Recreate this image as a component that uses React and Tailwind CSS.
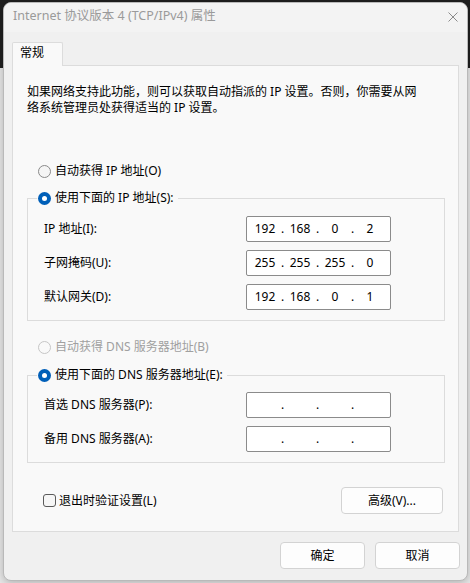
import React from 'react';

const font = "font-['Noto_Sans','Noto_Sans_CJK_SC',sans-serif]";

// one radio circle, with selected / disabled looks
function Radio({ checked, disabled }) {
  if (checked) {
    return (
      <span className="flex h-[13px] w-[13px] shrink-0 items-center justify-center rounded-full bg-[#005fb8]">
        <span className="h-[5px] w-[5px] rounded-full bg-white" />
      </span>
    );
  }
  return (
    <span
      className={`h-[13px] w-[13px] shrink-0 rounded-full border ${disabled ? 'border-[#c6c6c6] bg-[#f9f9f9]' : 'border-[#8a8a8a] bg-[#f5f5f5]'}`}
    />
  );
}

function RadioRow({ checked, disabled, children }) {
  return (
    <div className={`flex h-[16px] items-center gap-[4px] leading-[16px] ${disabled ? 'text-[#a0a0a0]' : 'text-black'}`}>
      <Radio checked={checked} disabled={disabled} />
      <span>{children}</span>
    </div>
  );
}

// the four-part address box
function IpField({ parts }) {
  return (
    <div className="flex h-[26px] w-[145px] items-center rounded-[2px] border border-[#8b8b8b] bg-white pl-[3px] leading-[16px]">
      {parts.map((p, i) => (
        <div key={i} className="flex w-[35px] items-center">
          <span className="w-[30px] text-center">{p}</span>
          {i < 3 && <span className="w-[5px] text-center">.</span>}
        </div>
      ))}
    </div>
  );
}

function FieldRow({ label, parts }) {
  return (
    <div className="flex items-center">
      <span className="w-[202px] leading-[16px]">{label}</span>
      <IpField parts={parts} />
    </div>
  );
}

function GroupBox({ legend, children, pt }) {
  return (
    <div className="ml-[14px] w-[418px]">
      <div className="relative z-10 ml-[10px] w-fit bg-[#f9f9f9] pl-[1px] pr-[4px]">
        <RadioRow checked>{legend}</RadioRow>
      </div>
      <div className={`-mt-[8px] flex flex-col gap-[8px] border border-[#dcdcdc] pb-[10px] pl-[16px] ${pt}`}>
        {children}
      </div>
    </div>
  );
}

export default function App() {
  return (
    <div className={`h-[583px] w-[470px] overflow-hidden bg-[linear-gradient(to_bottom,#1f1f1f_68px,#e9e9e9_68px)] pl-[3px] pt-[2px] text-[12px] ${font}`}>
      <div className="flex h-[579px] w-[465px] flex-col overflow-hidden rounded-[8px] border border-[#b9b9b9] bg-[#f0f0f0] shadow-[0_2px_10px_rgba(0,0,0,0.25)]">
        {/* title bar */}
        <div className="flex h-[29px] shrink-0 items-center justify-between bg-[#f3f3f3] pb-[3px] pl-[9px] pr-[9px]">
          <span className="text-[12.5px] leading-[16px] text-[#9a9a9a]">Internet 协议版本 4 (TCP/IPv4) 属性</span>
          <svg width="10" height="10" viewBox="0 0 10 10" className="mt-[1px]">
            <path d="M0.5 0.5 L9.5 9.5 M9.5 0.5 L0.5 9.5" stroke="#8a8a8a" strokeWidth="1" />
          </svg>
        </div>

        {/* tab */}
        <div className="relative z-10 -mb-[1px] ml-[8px] mt-[10px] flex h-[24px] w-[51px] items-start rounded-t-[2px] border border-b-0 border-[#dcdcdc] bg-[#f9f9f9] pl-[7px] pt-[2px] leading-[16px] text-black">
          常规
        </div>

        {/* tab panel */}
        <div className="mx-[8px] flex w-[447px] flex-col border border-[#dcdcdc] bg-[#f9f9f9] pb-[17px] text-black">
          <p className="ml-[14px] mt-[18px] leading-[16px]">
            如果网络支持此功能，则可以获取自动指派的 IP 设置。否则，你需要从网
            <br />
            络系统管理员处获得适当的 IP 设置。
          </p>

          <div className="ml-[25px] mt-[47px]">
            <RadioRow>自动获得 IP 地址(O)</RadioRow>
          </div>

          <div className="mt-[11px]">
            <GroupBox legend="使用下面的 IP 地址(S):" pt="pt-[17px]">
              <FieldRow label="IP 地址(I):" parts={['192', '168', '0', '2']} />
              <FieldRow label="子网掩码(U):" parts={['255', '255', '255', '0']} />
              <FieldRow label="默认网关(D):" parts={['192', '168', '0', '1']} />
            </GroupBox>
          </div>

          <div className="ml-[25px] mt-[18px]">
            <RadioRow disabled>自动获得 DNS 服务器地址(B)</RadioRow>
          </div>

          <div className="mt-[12px]">
            <GroupBox legend="使用下面的 DNS 服务器地址(E):" pt="pt-[16px]">
              <FieldRow label="首选 DNS 服务器(P):" parts={['', '', '', '']} />
              <FieldRow label="备用 DNS 服务器(A):" parts={['', '', '', '']} />
            </GroupBox>
          </div>

          <div className="mt-[24px] flex items-center justify-between pl-[30px] pr-[15px]">
            <label className="flex items-center gap-[3px] leading-[16px]">
              <span className="h-[13px] w-[13px] rounded-[3px] border border-[#5a5a5a] bg-[#f6f6f6]" />
              <span>退出时验证设置(L)</span>
            </label>
            <button className="flex h-[27px] w-[102px] items-center justify-center rounded-[4px] border border-[#d3d3d3] bg-[#fdfdfd] leading-[16px] text-black">
              高级(V)...
            </button>
          </div>
        </div>

        {/* dialog buttons */}
        <div className="mt-[10px] flex justify-end gap-[10px] pr-[7px]">
          <button className="flex h-[27px] w-[85px] items-center justify-center rounded-[4px] border border-[#d3d3d3] bg-[#fdfdfd] leading-[16px] text-black">
            确定
          </button>
          <button className="flex h-[27px] w-[85px] items-center justify-center rounded-[4px] border border-[#d3d3d3] bg-[#fdfdfd] leading-[16px] text-black">
            取消
          </button>
        </div>
      </div>
    </div>
  );
}
